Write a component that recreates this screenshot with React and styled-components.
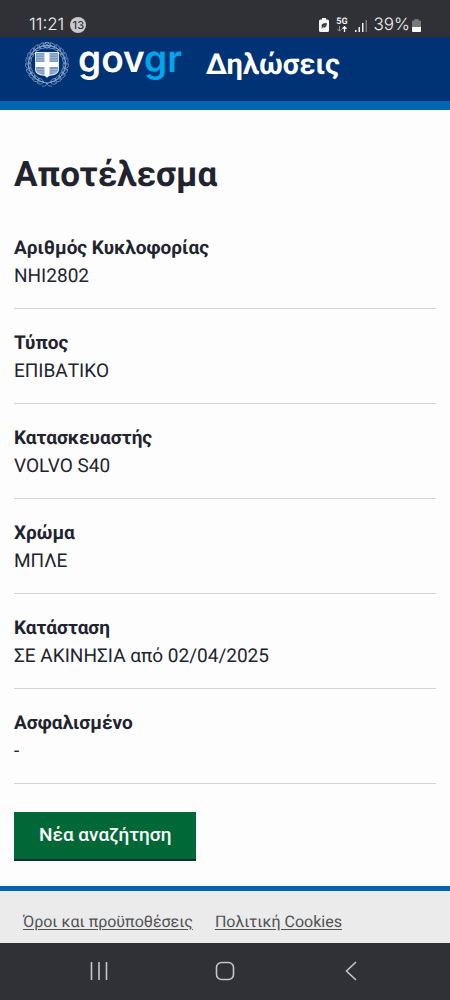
import React from 'react';
import styled, { createGlobalStyle } from 'styled-components';

const GlobalStyle = createGlobalStyle`
  * {
    box-sizing: border-box;
  }
  body {
    margin: 0;
    background: #fdfdfd;
    color: #21242e;
    font-family: Roboto, 'Noto Sans', sans-serif;
    text-rendering: geometricPrecision;
  }
`;

const Page = styled.div`
  display: flex;
  flex-direction: column;
  min-height: 100vh;
`;

const StatusBar = styled.div`
  display: flex;
  align-items: center;
  justify-content: space-between;
  padding: 13px 29px 0;
  height: 37px;
  background: #303136;
  color: #f1f1f2;
  font-family: Inter, sans-serif;
  font-size: 17px;
  font-weight: 300;
  line-height: 24px;
`;
const StatusGroup = styled.div`
  display: flex;
  align-items: center;
  gap: ${(props) => props.$gap}px;
`;
const Count = styled.span`
  width: 16px;
  height: 16px;
  border-radius: 50%;
  background: #c9c9cb;
  color: #303136;
  font-size: 11px;
  font-weight: 500;
  line-height: 16px;
  text-align: center;
`;
const Network = styled.div`
  display: flex;
  flex-direction: column;
  align-items: center;
  font-family: Roboto, sans-serif;
  font-size: 9px;
  font-weight: 700;
  line-height: 8px;
`;
const Charge = styled.div`
  display: flex;
  align-items: center;
  gap: 2px;
`;

const Header = styled.header`
  display: flex;
  align-items: flex-start;
  gap: 24px;
  height: 73px;
  padding: 4px 24px 0;
  border-bottom: 9px solid #0065b3;
  background: #003375;
  color: #fff;
`;
const Brand = styled.a`
  display: flex;
  gap: 8px;
  color: inherit;
  text-decoration: none;
`;
const Wordmark = styled.span`
  font-family: Inter, sans-serif;
  font-size: 37px;
  font-weight: 600;
  line-height: 36px;
  > span {
    color: #00a5ec;
  }
`;
const ServiceName = styled.span`
  font-size: 29px;
  font-weight: 700;
  line-height: 48px;
`;

const Main = styled.main`
  flex: 1;
  padding: 41px 14px 25px;
`;
const Title = styled.h1`
  margin: 0 0 35px;
  font-size: 35px;
  font-weight: 700;
  line-height: 48px;
`;
const Summary = styled.dl`
  margin: 0 0 28px;
`;
const SummaryRow = styled.div`
  padding: 0 0 18px;
  margin-bottom: 20px;
  border-bottom: 1px solid #d2d3d5;
  font-size: 19px;
  line-height: 28px;
`;
const Term = styled.dt`
  font-weight: 700;
`;
const Detail = styled.dd`
  margin: 0;
`;
const SearchButton = styled.button`
  display: block;
  padding: 9px 25px 12px;
  border: 0;
  background: #006837;
  box-shadow: inset 0 -2px 0 #18302a;
  color: #fff;
  font-family: inherit;
  font-size: 19px;
  font-weight: 500;
  line-height: 28px;
`;

const Footer = styled.footer`
  display: flex;
  flex-wrap: wrap;
  gap: 22px;
  padding: 19px 23px 9px;
  border-top: 5px solid #0065b3;
  background: #ebebeb;
`;
const FooterLink = styled.a`
  color: #505155;
  font-size: 16px;
  line-height: 24px;
  text-underline-offset: 2px;
`;

const NavBar = styled.nav`
  display: flex;
  align-items: center;
  justify-content: space-between;
  height: 57px;
  padding: 0 85px 2px;
  background: #303136;
`;
const NavButton = styled.button`
  display: flex;
  padding: 4px;
  border: 0;
  background: transparent;
  color: #c6c6c8;
`;

const rows = [
  { term: 'Αριθμός Κυκλοφορίας', detail: 'ΝΗΙ2802' },
  { term: 'Τύπος', detail: 'ΕΠΙΒΑΤΙΚΟ' },
  { term: 'Κατασκευαστής', detail: 'VOLVO S40' },
  { term: 'Χρώμα', detail: 'ΜΠΛΕ' },
  { term: 'Κατάσταση', detail: 'ΣΕ ΑΚΙΝΗΣΙΑ από 02/04/2025' },
  { term: 'Ασφαλισμένο', detail: '-' },
];

// angles of the laurel leaves, measured from the bottom of the wreath
const leaves = [14, 30, 46, 62, 78, 94, 110, 126, 142, 158, 172];

function Emblem() {
  return (
    <svg width="46" height="46" viewBox="0 0 46 46" fill="none" aria-hidden="true">
      <circle cx="23" cy="23" r="18.5" stroke="#6d8bb8" strokeWidth="0.7" />
      {[1, -1].map((side) => (
        <g key={side} transform={`translate(23 23) scale(${side} 1)`} stroke="#8fa8cc" strokeWidth="0.7">
          {leaves.map((angle) => (
            <g key={angle} transform={`rotate(${-angle}) translate(0 18.5)`}>
              <path d="M-1 0C0 2.8 2.5 3.4 5 2.2C3.8.4 1.6-.6-1 0Z" />
              <path d="M-1 0C.4-2.4 2.4-3.2 4.8-2.4C3.6-.6 1.6.4-1 0Z" />
            </g>
          ))}
          <path d="M-1 19c2 3 4 3.5 6 3M0 19.5l4-1.500" />
        </g>
      ))}
      <path d="M11 11h24v17c0 4-3 6-7 6.500-2.500.3-4 1-5 2.500-1-1.500-2.500-2.200-5-2.500-4-.5-7-2.500-7-6.500Z" fill="#dce5f1" />
      <path d="M12 12h22v16c0 3-2 4.700-6 5.200-2.200.3-4 .8-5 1.800-1-1-2.800-1.500-5-1.800-4-.5-6-2.200-6-5.200Z" fill="#7f9bc4" />
      <path d="M12.500 14h21M12.500 16.500h21M12.500 19h21M12.500 28.500h21M13 31h20" stroke="#a9bedb" strokeWidth="0.8" />
      <path d="M20.500 12h5v9h8.500v5h-8.500v8l-2.500 2-2.500-2v-8H12v-5h8.500Z" fill="#fff" />
    </svg>
  );
}

function App() {
  return (
    <Page>
      <GlobalStyle />
      <StatusBar>
        <StatusGroup $gap={6}>
          <span>11:21</span>
          <Count>13</Count>
        </StatusGroup>
        <StatusGroup $gap={7}>
          <svg width="10" height="14" viewBox="0 0 10 14" aria-hidden="true">
            <path d="M3 0h4v1.500h1.500A1.500 1.500 0 0 1 10 3v9.500a1.500 1.500 0 0 1-1.500 1.500h-7A1.500 1.500 0 0 1 0 12.500V3a1.500 1.500 0 0 1 1.500-1.500H3Z" fill="#f4f4f4" />
            <path d="M8 5c-3 0-5.500.5-5.500 2.700 0 .6.200 1 .5 1.300L2 10.500h1l.8-.9C6.500 10.200 8 8.500 8 5ZM4 8.700l2.500-2" fill="#303136" stroke="#f4f4f4" strokeWidth="0.3" />
          </svg>
          <Network>
            5G
            <svg width="10" height="6" viewBox="0 0 10 6" fill="none" aria-hidden="true">
              <path d="M2.500 0v5M.5 3.200l2 2 2-2" stroke="#97989b" />
              <path d="M7.500 6V1M5.500 2.800l2-2 2 2" stroke="#fff" strokeWidth="1.300" />
            </svg>
          </Network>
          <svg width="12" height="13" viewBox="0 0 12 13" aria-hidden="true">
            <path d="M0 11h1.500v2H0ZM3.500 8H5v5H3.500ZM7 4h1.500v9H7Z" fill="#f1f1f2" />
            <path d="M10.500 1H12v12h-1.500Z" fill="#77787c" />
          </svg>
          <Charge>
            39%
            <svg width="9" height="13" viewBox="0 0 9 13" aria-hidden="true">
              <path d="M2.500 0h4v1.500H8A1 1 0 0 1 9 2.500V8H0V2.500a1 1 0 0 1 1-1h1.500Z" fill="#77787c" />
              <path d="M0 8h9v4a1 1 0 0 1-1 1H1a1 1 0 0 1-1-1Z" fill="#fff" />
            </svg>
          </Charge>
        </StatusGroup>
      </StatusBar>

      <Header>
        <Brand href="#">
          <Emblem />
          <Wordmark>
            gov<span>gr</span>
          </Wordmark>
        </Brand>
        <ServiceName>Δηλώσεις</ServiceName>
      </Header>

      <Main>
        <Title>Αποτέλεσμα</Title>
        <Summary>
          {rows.map((row) => (
            <SummaryRow key={row.term}>
              <Term>{row.term}</Term>
              <Detail>{row.detail}</Detail>
            </SummaryRow>
          ))}
        </Summary>
        <SearchButton type="button">Νέα αναζήτηση</SearchButton>
      </Main>

      <Footer>
        <FooterLink href="#">Όροι και προϋποθέσεις</FooterLink>
        <FooterLink href="#">Πολιτική Cookies</FooterLink>
      </Footer>

      <NavBar>
        <NavButton type="button" aria-label="Recent apps">
          <svg width="20" height="20" viewBox="0 0 20 20" fill="none">
            <path d="M2.500 1v18M10 1v18M17.500 1v18" stroke="currentColor" strokeWidth="1.600" />
          </svg>
        </NavButton>
        <NavButton type="button" aria-label="Home">
          <svg width="20" height="20" viewBox="0 0 20 20" fill="none">
            <rect x="1.500" y="1.500" width="17" height="17" rx="5" stroke="currentColor" strokeWidth="1.600" />
          </svg>
        </NavButton>
        <NavButton type="button" aria-label="Back">
          <svg width="20" height="20" viewBox="0 0 20 20" fill="none">
            <path d="M15 1L5.500 10l9.500 9" stroke="currentColor" strokeWidth="1.600" />
          </svg>
        </NavButton>
      </NavBar>
    </Page>
  );
}

export default App;
